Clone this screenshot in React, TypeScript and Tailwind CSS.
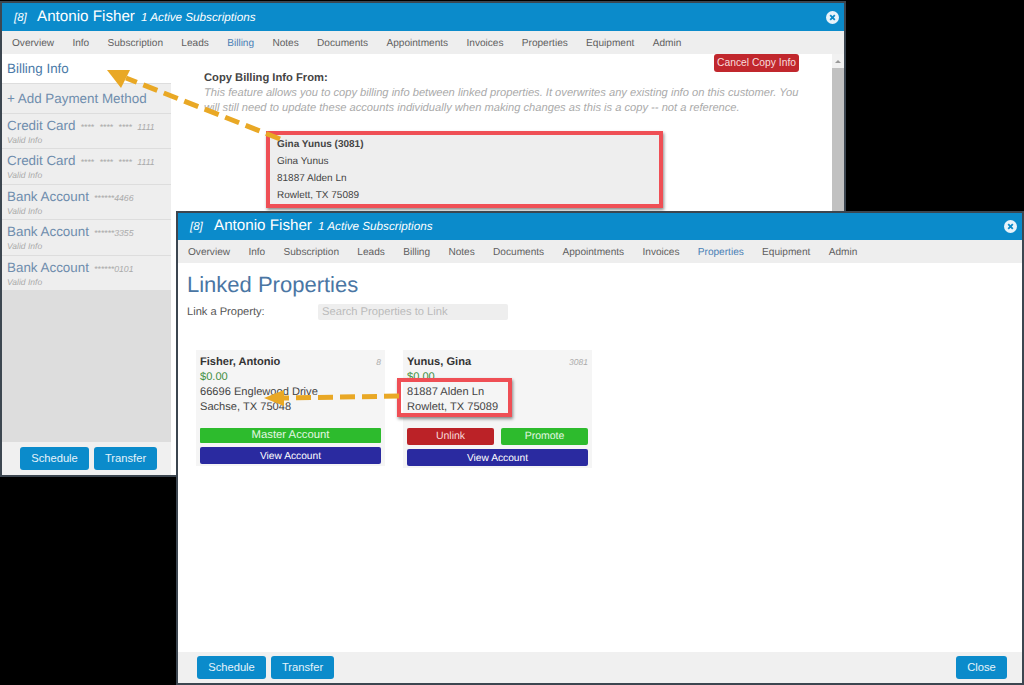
const tabs = ['Overview', 'Info', 'Subscription', 'Leads', 'Billing', 'Notes', 'Documents', 'Appointments', 'Invoices', 'Properties', 'Equipment', 'Admin'];

const payments = [
  { name: 'Credit Card', num: '**** **** **** 1111' },
  { name: 'Credit Card', num: '**** **** **** 1111' },
  { name: 'Bank Account', num: '******4466' },
  { name: 'Bank Account', num: '******3355' },
  { name: 'Bank Account', num: '******0101' },
];

function CloseIcon() {
  return (
    <svg width="13" height="13" viewBox="0 0 13 13">
      <circle cx="6.5" cy="6.5" r="6.5" fill="#e8f3fa" />
      <path d="M4.2 4.2 8.8 8.8M8.8 4.2 4.2 8.8" stroke="#0b8ac9" strokeWidth="1.8" />
    </svg>
  );
}

function TitleBar({ height, idWidth }: { height: string; idWidth: string }) {
  return (
    <div className={`flex items-center justify-between bg-[#0b8bcb] pl-3 pr-[5px] text-white ${height}`}>
      <div className="flex items-baseline">
        <span className={`text-[11.5px] italic ${idWidth}`}>[8]</span>
        <span className="text-[15.2px]">Antonio Fisher</span>
        <span className="ml-[6px] text-[11.7px] italic">1 Active Subscriptions</span>
      </div>
      <CloseIcon />
    </div>
  );
}

function TabBar({ active }: { active: string }) {
  return (
    <div className="flex h-[23px] shrink-0 items-center gap-[18.3px] bg-[#eeeeee] pl-[10px] pt-[3px] text-[10.1px] text-[#5f5f5f]">
      {tabs.map((tab) => (
        <span key={tab} className={tab === active ? 'text-[#4a7fb5]' : ''}>
          {tab}
        </span>
      ))}
    </div>
  );
}

function BlueButton({ label, width }: { label: string; width: string }) {
  return (
    <button className={`flex h-[23px] items-center justify-center rounded-[3px] bg-[#0b8bcb] text-[11.2px] text-[#e6f3fa] ${width}`}>
      {label}
    </button>
  );
}

function BillingWindow() {
  return (
    <div className="absolute left-0 top-[1px] flex h-[476px] w-[846px] flex-col overflow-hidden border-2 border-[#3c4650] bg-white font-['Liberation_Sans',sans-serif]">
      <TitleBar height="h-[28px] shrink-0" idWidth="w-[23px]" />
      <TabBar active="Billing" />
      <div className="flex min-h-0 flex-1">
        <aside className="flex w-[169px] shrink-0 flex-col">
          <div className="flex h-[30px] items-center border-b border-[#dddddd] pl-[5px] pt-[1px] text-[13.4px] text-[#4a7aa8]">Billing Info</div>
          <div className="flex h-[30px] items-center border-b border-[#dddddd] bg-[#eeeeee] pl-[5px] pt-[1px] text-[13.4px] text-[#6f8dad]">+ Add Payment Method</div>
          {payments.map((item, i) => (
            <div key={i} className="flex h-[35.4px] flex-col border-b border-[#dddddd] bg-[#eeeeee] pl-[5px] pt-[5px]">
              <div className="flex items-baseline gap-[5px] leading-[14px]">
                <span className="text-[13.4px] text-[#6f8dad]">{item.name}</span>
                <span className="text-[8.7px] italic text-[#aaaaaa] [word-spacing:3px]">{item.num}</span>
              </div>
              <span className="text-[8.5px] italic leading-[12px] text-[#aaaaaa]">Valid Info</span>
            </div>
          ))}
          <div className="flex-1 bg-[#dddddd]" />
          <div className="flex h-[33px] shrink-0 items-center gap-[5px] bg-[#f0f0f0] pl-[18px]">
            <BlueButton label="Schedule" width="w-[69px]" />
            <BlueButton label="Transfer" width="w-[63px]" />
          </div>
        </aside>
        <main className="relative flex-1 pl-[33px] pt-[17px]">
          <button className="absolute right-[33px] top-0 flex h-[18px] w-[85px] items-center justify-center rounded-[3px] bg-[#c1272d] text-[10.3px] text-[#f8dcdc]">
            Cancel Copy Info
          </button>
          <h2 className="text-[11.2px] font-bold leading-[15px] text-[#444444]">Copy Billing Info From:</h2>
          <p className="w-[597px] text-[11.15px] italic leading-[15px] text-[#aaaaaa]">
            This feature allows you to copy billing info between linked properties. It overwrites any existing info on this customer. You will still need to update these accounts individually when making changes as this is a copy -- not a reference.
          </p>
          <div className="ml-[62px] mt-[15px] h-[77px] w-[397px] border-4 border-[#ef4f55] bg-[#eeeeee] pl-[7px] pt-[1px] text-[10px] leading-[17px] text-[#444444] shadow-[1px_2px_3px_rgba(0,0,0,0.45)]">
            <div className="font-bold">Gina Yunus (3081)</div>
            <div>Gina Yunus</div>
            <div>81887 Alden Ln</div>
            <div>Rowlett, TX 75089</div>
          </div>
        </main>
        <div className="flex w-[12px] shrink-0 flex-col bg-[#f1f1f1]">
          <div className="flex h-[14px] items-center justify-center">
            <div className="h-0 w-0 border-x-[3px] border-b-[3px] border-x-transparent border-b-[#999999]" />
          </div>
          <div className="flex-1 bg-[#c1c1c1]" />
        </div>
      </div>
    </div>
  );
}

function PropertyCard({ name, id, addr1, addr2, children }: { name: string; id: string; addr1: string; addr2: string; children: React.ReactNode }) {
  return (
    <div className="flex w-[189px] flex-col bg-[#f5f5f5] pb-[2px] pl-[4px] pt-[5px] text-[11.1px] leading-[15px] text-[#444444]">
      <div className="flex h-[15px] w-[181px] items-baseline justify-between">
        <span className="font-bold text-[#333333]">{name}</span>
        <span className="text-[8.5px] italic text-[#aaaaaa]">{id}</span>
      </div>
      <div className="text-[#3f8f3f]">$0.00</div>
      <div>{addr1}</div>
      <div>{addr2}</div>
      <div className="mt-[13px] flex w-[181px] flex-col">{children}</div>
    </div>
  );
}

function PropertiesWindow() {
  return (
    <div className="absolute left-[176px] top-[211px] flex h-[474px] w-[848px] flex-col overflow-hidden border-2 border-[#3c4650] bg-white font-['Liberation_Sans',sans-serif]">
      <TitleBar height="h-[27px] shrink-0" idWidth="w-[24px]" />
      <TabBar active="Properties" />
      <div className="flex-1 pl-[9px] pt-[8px]">
        <h1 className="text-[22px] leading-[28px] text-[#4a76a4]">Linked Properties</h1>
        <div className="mt-[5px] flex h-[16px] items-center text-[11.1px] text-[#555555]">
          <span className="w-[131px]">Link a Property:</span>
          <div className="flex h-[16px] w-[190px] items-center rounded-[2px] bg-[#eeeeee] pl-[4px] text-[11.2px] text-[#bbbbbb]">Search Properties to Link</div>
        </div>
        <div className="ml-[9px] mt-[30px] flex items-start gap-[18px]">
          <PropertyCard name="Fisher, Antonio" id="8" addr1="66696 Englewood Drive" addr2="Sachse, TX 75048">
            <div className="flex h-[15px] items-center justify-center rounded-[1px] bg-[#2dbb2d] text-[11.3px] text-[#e4f7e4]">Master Account</div>
            <div className="mt-[4px] flex h-[17px] items-center justify-center rounded-[2px] bg-[#2a2aa0] pt-[1px] text-[10.2px] text-white">View Account</div>
          </PropertyCard>
          <PropertyCard name="Yunus, Gina" id="3081" addr1="81887 Alden Ln" addr2="Rowlett, TX 75089">
            <div className="flex gap-[7px]">
              <div className="flex h-[17px] w-[87px] items-center justify-center rounded-[2px] bg-[#bb2227] text-[10.5px] text-[#f8dcdc]">Unlink</div>
              <div className="flex h-[17px] w-[87px] items-center justify-center rounded-[2px] bg-[#2dbb2d] text-[10.5px] text-[#e4f7e4]">Promote</div>
            </div>
            <div className="mt-[4px] flex h-[17px] items-center justify-center rounded-[2px] bg-[#2a2aa0] pt-[1px] text-[10.2px] text-white">View Account</div>
          </PropertyCard>
        </div>
      </div>
      <div className="flex h-[31px] shrink-0 items-center justify-between bg-[#f0f0f0] pl-[19px] pr-[15px]">
        <div className="flex gap-[5px]">
          <BlueButton label="Schedule" width="w-[69px]" />
          <BlueButton label="Transfer" width="w-[63px]" />
        </div>
        <BlueButton label="Close" width="w-[51px]" />
      </div>
    </div>
  );
}

// callout arrows drawn over both windows
function Arrows() {
  return (
    <svg className="absolute left-0 top-0" width="1024" height="685" viewBox="0 0 1024 685" fill="none">
      <path d="M280 139 126 78" stroke="#e9a825" strokeWidth="5" strokeDasharray="15 7" />
      <path d="M107 70 130 70 121 88Z" fill="#e9a825" />
      <path d="M399 396 282 398" stroke="#e9a825" strokeWidth="5" strokeDasharray="15 7" />
      <path d="M264 398 284 390 284 406Z" fill="#e9a825" />
    </svg>
  );
}

export default function App() {
  return (
    <div className="relative h-[685px] w-[1024px] overflow-hidden bg-black [text-rendering:geometricPrecision]">
      <BillingWindow />
      <PropertiesWindow />
      {/* red highlight around the address on the second card */}
      <div className="absolute left-[397px] top-[378px] h-[39px] w-[115px] border-4 border-[#ef4f55] shadow-[1px_2px_3px_rgba(0,0,0,0.45)]" />
      <Arrows />
    </div>
  );
}
